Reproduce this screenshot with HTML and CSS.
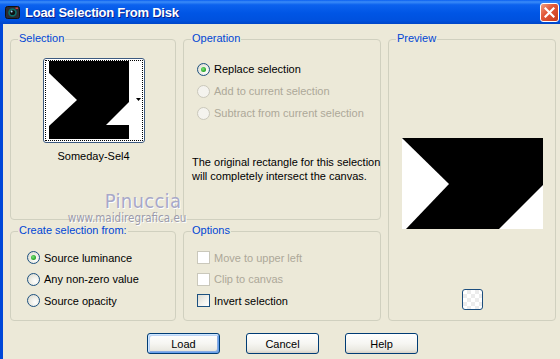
FILE: index.html
```html
<!DOCTYPE html>
<html>
<head>
<meta charset="utf-8">
<title>Load Selection From Disk</title>
<link rel="stylesheet" href="styles.css">
</head>
<body>
<div class="window">
  <div class="titlebar">
    <span class="app-icon">
      <svg width="15" height="15" viewBox="0 0 15 15">
        <rect x="0.5" y="1.5" width="14" height="12" rx="2" fill="#2b2b33" stroke="#111"/>
        <circle cx="7.5" cy="7.5" r="4.3" fill="#0d6e6a"/>
        <circle cx="7.5" cy="7.5" r="2.6" fill="#111"/>
        <circle cx="6.6" cy="6.6" r="1" fill="#9fe0ff"/>
        <rect x="10.5" y="2.5" width="2.5" height="1.5" fill="#d04040"/>
      </svg>
    </span>
    <span class="title">Load Selection From Disk</span>
    <span class="close">
      <svg width="11" height="11" viewBox="0 0 11 11"><path d="M1.5 1.5 L9.5 9.5 M9.5 1.5 L1.5 9.5" stroke="#fff" stroke-width="2.2" stroke-linecap="square"/></svg>
    </span>
  </div>
  <div class="body">
    <div class="groups">
      <div class="group g-selection">
        <span class="legend">Selection</span>
        <div class="thumb">
          <div class="focus">
            <svg class="thumb-img" width="80" height="78" viewBox="0 0 80 78">
              <rect width="80" height="78" fill="#000"/>
              <polygon points="0,12 28,39 0,65" fill="#fff"/>
              <polygon points="80,41 57,64 80,64" fill="#fff"/>
            </svg>
            <span class="strip"></span>
            <svg class="arrow" width="5" height="3" viewBox="0 0 5 3"><polygon points="0,0 5,0 2.5,3" fill="#000"/></svg>
          </div>
        </div>
        <div class="thumb-name">Someday-Sel4</div>
      </div>

      <div class="group g-operation">
        <span class="legend">Operation</span>
        <div class="opt-list">
          <label class="row"><span class="radio checked"></span>Replace selection</label>
          <label class="row disabled"><span class="radio off"></span>Add to current selection</label>
          <label class="row disabled"><span class="radio off"></span>Subtract from current selection</label>
        </div>
        <p class="note">The original rectangle for this selection<br>will completely intersect the canvas.</p>
      </div>

      <div class="group g-preview">
        <span class="legend">Preview</span>
        <svg class="preview-img" width="141" height="91" viewBox="0 0 141 91">
          <rect width="141" height="91" fill="#000"/>
          <polygon points="0,0 47,46 4,91 0,91" fill="#fff"/>
          <polygon points="141,47 97,91 141,91" fill="#fff"/>
        </svg>
        <span class="bg-btn"></span>
      </div>

      <div class="group g-create">
        <span class="legend">Create selection from:</span>
        <div class="opt-list">
          <label class="row"><span class="radio checked"></span>Source luminance</label>
          <label class="row"><span class="radio"></span>Any non-zero value</label>
          <label class="row"><span class="radio"></span>Source opacity</label>
        </div>
      </div>

      <div class="group g-options">
        <span class="legend">Options</span>
        <div class="opt-list">
          <label class="row disabled"><span class="check off"></span>Move to upper left</label>
          <label class="row disabled"><span class="check off"></span>Clip to canvas</label>
          <label class="row"><span class="check"></span>Invert selection</label>
        </div>
      </div>
    </div>

    <div class="buttons">
      <button class="btn default">Load</button>
      <button class="btn">Cancel</button>
      <button class="btn">Help</button>
    </div>

    <div class="watermark">
      <div class="wm-name">Pinuccia</div>
      <div class="wm-url">www.maidiregrafica.eu</div>
    </div>
  </div>
</div>
</body>
</html>
```

FILE: styles.css
```css
* { box-sizing: border-box; }
html, body { margin: 0; padding: 0; }
body {
  width: 560px;
  height: 359px;
  overflow: hidden;
  background: #ECE9D8;
  font-family: "Liberation Sans", Arial, sans-serif;
  font-size: 11px;
  color: #000;
}
.window {
  width: 560px;
  height: 359px;
  display: flex;
  flex-direction: column;
  background: #ECE9D8;
}
.titlebar {
  height: 24px;
  flex: none;
  display: flex;
  align-items: center;
  padding-left: 5px;
  background: linear-gradient(to bottom, #0A5FF0 0%, #3B8CF8 8%, #0C62EE 20%, #0055E5 55%, #0051DE 85%, #0046C8 100%);
  color: #fff;
}
.app-icon { width: 15px; height: 15px; display: flex; }
.title {
  margin-left: 5px;
  font-weight: bold;
  font-size: 13px;
  letter-spacing: -0.25px;
  text-shadow: 1px 1px 0 #0A1E8A;
  flex: 1;
  padding-top: 1px;
}
.close {
  width: 19px;
  height: 19px;
  margin-right: 1px;
  margin-top: 1px;
  border: 1px solid #fff;
  border-radius: 3px;
  background: linear-gradient(135deg, #F0A080 0%, #E2593A 40%, #C83A1A 100%);
  display: flex;
  align-items: center;
  justify-content: center;
}
.body {
  flex: 1;
  position: relative;
  border-left: 3px solid #0047D8;
  padding: 15px 0 0 7px;
  display: flex;
  flex-direction: column;
}
.groups {
  display: grid;
  grid-template-columns: 166px 198px 168px;
  grid-template-rows: 181px 90px;
  column-gap: 7px;
  row-gap: 11px;
}
.group {
  position: relative;
  border: 1px solid #D0D0BF;
  border-radius: 4px;
}
.legend {
  position: absolute;
  top: -8px;
  left: 7px;
  padding: 0 1px;
  background: #ECE9D8;
  color: #0046D5;
  line-height: 13px;
  white-space: nowrap;
}
.g-selection {
  display: flex;
  flex-direction: column;
  align-items: center;
  padding-top: 18px;
}
.g-operation { padding: 18px 0 0 13px; }
.g-preview {
  grid-row: 1 / span 2;
  grid-column: 3;
  display: flex;
  flex-direction: column;
  align-items: center;
  padding-top: 98px;
}
.g-create { padding: 15px 0 0 16px; }
.g-options { padding: 15px 0 0 13px; }

.thumb {
  width: 102px;
  height: 85px;
  border: 1px solid #3C5A80;
  border-radius: 3px;
  padding: 1px;
  background: #fff;
  margin-left: 1px;
}
.focus {
  height: 100%;
  border: 1px dotted #000;
  display: flex;
  align-items: flex-start;
  padding-left: 3px;
  position: relative;
}
.thumb-img { display: block; flex: none; }
.strip { flex: 1; }
.arrow { position: absolute; right: 1px; top: 37px; display: block; }
.thumb-name {
  margin-top: 7px;
  line-height: 13px;
  margin-left: 1px;
}

.opt-list { display: flex; flex-direction: column; }
.row {
  height: 22px;
  display: flex;
  align-items: center;
  gap: 3px;
  white-space: nowrap;
}
.g-create .row, .g-options .row { height: 21.5px; }
.row.disabled { color: #ACA899; }
.radio {
  width: 13px;
  height: 13px;
  border-radius: 50%;
  border: 1px solid #1C5180;
  background: radial-gradient(circle at 65% 65%, #FFFFFF 0%, #F0F0EA 40%, #D8D5C8 100%);
  position: relative;
  flex: none;
  margin-right: 1px;
}
.radio.off { border-color: #CAC8BB; background: #F4F3EE; }
.radio.checked::after {
  content: "";
  position: absolute;
  left: 3px;
  top: 3px;
  width: 5px;
  height: 5px;
  border-radius: 50%;
  background: radial-gradient(circle at 40% 40%, #7BE37B 0%, #21A121 70%, #1A8A1A 100%);
}
.check {
  width: 13px;
  height: 13px;
  border: 1px solid #1C5180;
  background: linear-gradient(135deg, #DCDBD2 0%, #F4F4F0 60%, #FFFFFF 100%);
  flex: none;
  margin-right: 1px;
}
.check.off { border-color: #CAC8BB; background: #FFFFFF; }
.note {
  margin: 31px 0 0 -5px;
  line-height: 14px;
  white-space: nowrap;
}

.preview-img { display: block; }
.bg-btn {
  margin-top: 60px;
  width: 21px;
  height: 21px;
  border: 1px solid #1C4E7E;
  border-radius: 3px;
  background-color: #fff;
  background-image:
    linear-gradient(45deg, #ECECEC 25%, transparent 25%, transparent 75%, #ECECEC 75%),
    linear-gradient(45deg, #ECECEC 25%, transparent 25%, transparent 75%, #ECECEC 75%);
  background-size: 8px 8px;
  background-position: 0 0, 4px 4px;
}

.buttons {
  display: flex;
  gap: 26px;
  margin-top: 12px;
  padding-left: 137px;
}
.btn {
  width: 73px;
  height: 21px;
  border: 1px solid #003C74;
  border-radius: 3px;
  background: linear-gradient(to bottom, #FFFFFF 0%, #F6F6F2 50%, #EAE9E1 85%, #D6D0C5 100%);
  font-family: "Liberation Sans", Arial, sans-serif;
  font-size: 11px;
  color: #000;
  padding: 0;
}
.btn.default {
  box-shadow: inset 1px 1px 0 #CEE7FF, inset -1px -1px 0 #69A1EC, inset 2px 2px 0 #BCD4F6, inset -2px -2px 0 #89ADE4;
}

.watermark {
  position: absolute;
  left: 61px;
  top: 167px;
  width: 126px;
  display: flex;
  flex-direction: column;
  align-items: center;
  pointer-events: none;
}
.wm-name {
  font-family: "DejaVu Sans Condensed", "DejaVu Sans", sans-serif;
  font-size: 20px;
  line-height: 21px;
  color: #A8A8C8;
  letter-spacing: 0.3px;
  text-shadow: 1px 1px 0 #FFFFFF;
  margin-left: 32px;
}
.wm-url {
  font-family: "DejaVu Sans Condensed", "DejaVu Sans", sans-serif;
  font-size: 11.5px;
  line-height: 12px;
  color: #9A9AAA;
  text-shadow: 1px 1px 0 #FFFFFF;
}
```
